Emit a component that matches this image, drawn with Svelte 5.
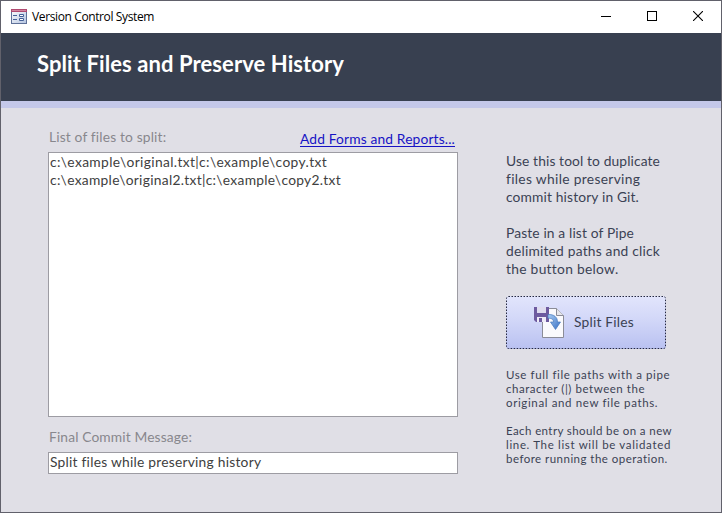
<script>
  const files = [
    ['c:\\example\\original.txt|c:\\example\\copy.txt', 277],
    ['c:\\example\\original2.txt|c:\\example\\copy2.txt', 291]
  ];
  const intro = [
    [['Use this tool to duplicate', 154], ['files while preserving', 134], ['commit history in Git.', 133]],
    [['Paste in a list of Pipe', 128], ['delimited paths and click', 154], ['the button below.', 112]]
  ];
  const notes = [
    [['Use full file paths with a pipe', 164], ['character (|) between the', 139], ['original and new file paths.', 152]],
    [['Each entry should be on a new', 166], ['line. The list will be validated', 165], ['before running the operation.', 162]]
  ];

  // Spreads the letters of a line so that it fills the given measure.
  function measure(node, width) {
    const natural = node.getBoundingClientRect().width;
    node.style.letterSpacing = `${(width - natural) / node.textContent.length}px`;
  }
</script>

<div class="window">
  <div class="titlebar">
    <svg class="form-icon" width="16" height="15" viewBox="0 0 16 15">
      <defs>
        <linearGradient id="frm" x1="0" y1="0" x2="1" y2="1">
          <stop offset="0" stop-color="#fff" /><stop offset="1" stop-color="#b4c4e0" />
        </linearGradient>
      </defs>
      <rect x=".5" y=".5" width="15" height="14" fill="url(#frm)" stroke="#5f7199" />
      <rect width="16" height="3" fill="#b04a70" />
      <rect x="1" y="1" width="14" height="1" fill="#d385a0" />
      <path d="M2 6.5h4M2 10.5h4" stroke="#456098" />
      <path d="M8.5 5.5h4v2h-4zM8.5 9.5h4v2h-4z" fill="#fff" stroke="#456098" />
    </svg>
    <span class="caption"><span use:measure={122}>Version Control System</span></span>
    <div class="controls">
      <svg width="10" height="10"><path d="M0 5.5h10" stroke="#000" /></svg>
      <svg width="10" height="10"><rect x=".5" y=".5" width="9" height="9" fill="none" stroke="#000" /></svg>
      <svg width="10" height="10"><path d="M0 0l10 10M10 0L0 10" stroke="#000" stroke-width="1.1" /></svg>
    </div>
  </div>
  <header><h1><span use:measure={307}>Split Files and Preserve History</span></h1></header>
  <main>
    <section class="left">
      <div class="labels">
        <span class="label"><span use:measure={117}>List of files to split:</span></span>
        <a href="#forms"><span use:measure={155}>Add Forms and Reports...</span></a>
      </div>
      <div class="field list">
        {#each files as [text, w]}<div><span use:measure={w}>{text}</span></div>{/each}
      </div>
      <div class="label message-label"><span use:measure={143}>Final Commit Message:</span></div>
      <div class="field message"><span use:measure={211}>Split files while preserving history</span></div>
    </section>
    <aside>
      <div class="intro">
        {#each intro as para}
          <p>{#each para as [text, w]}<span class="line"><span use:measure={w}>{text}</span></span>{/each}</p>
        {/each}
      </div>
      <button>
        <svg class="border" width="160" height="53"><rect x=".5" y=".5" width="159" height="52" rx="2" fill="none" stroke="#25283e" stroke-dasharray="1.5 1.5" /></svg>
        <svg class="split-icon" width="32" height="32" viewBox="0 0 32 32">
          <defs>
            <linearGradient id="arr" x1="0" y1="0" x2="1" y2="1">
              <stop offset="0" stop-color="#a9cdf2" /><stop offset="1" stop-color="#386fc4" />
            </linearGradient>
          </defs>
          <path d="M9.5 1.5h14l7 7v22h-21z" fill="#fafafd" stroke="#8b8c97" />
          <path d="M23.5 1.5v7h7" fill="#e5e5eb" stroke="#8b8c97" />
          <path d="M1 0h15v15H3l-2-2z" fill="#6d5a9f" />
          <path d="M4 0h9v6H4z" fill="#dfdcef" />
          <path d="M4 10h9v5H4z" fill="#eeebf7" />
          <path d="M6 11h3v4H6z" fill="#6d5a9f" />
          <path d="M15 7.500c6-.2 9.500 2.500 9.500 7.500h3l-5 7.500-5-7.500h3c0-2.500-1.500-3.800-5.500-3.800z" fill="url(#arr)" stroke="#4679bd" stroke-width=".7" />
        </svg>
        <span class="btn-text"><span use:measure={60}>Split Files</span></span>
      </button>
      <div class="notes">
        {#each notes as para}
          <p>{#each para as [text, w]}<span class="line"><span use:measure={w}>{text}</span></span>{/each}</p>
        {/each}
      </div>
    </aside>
  </main>
</div>

<style>
  .window {
    box-sizing: border-box;
    width: 722px;
    height: 513px;
    border: 1px solid #61616b;
    background: #e0dfe6;
    display: flex;
    flex-direction: column;
    font-family: Lato, "Open Sans", sans-serif;
    font-size: 13.8px;
    line-height: 18px;
    color: #3b4254;
    white-space: nowrap;
    overflow: hidden;
  }
  .titlebar {
    height: 32px;
    flex: none;
    background: #fff;
    display: flex;
    align-items: center;
    padding: 0 18px 0 10px;
    box-sizing: border-box;
    font-family: "Open Sans", sans-serif;
    font-size: 12px;
    color: #000;
  }
  .form-icon { margin-top: -2px; }
  .caption { margin: -1px 0 0 5px; }
  .controls { margin-left: auto; margin-top: -2px; display: flex; gap: 36px; }
  header {
    height: 51px;
    flex: none;
    background: #384050;
    border-bottom: 7px solid #c4c8e9;
    padding: 17px 0 0 36px;
  }
  h1 {
    margin: 0;
    font-size: 22px;
    line-height: 28px;
    font-weight: 700;
    color: #fff;
  }
  main { display: flex; padding: 20px 0 0 47px; }
  .left { width: 410px; margin-right: 48px; }
  .labels { display: flex; justify-content: space-between; height: 24px; padding: 0 3px 0 1px; }
  .label { color: #88878d; }
  a { color: #1713c4; text-decoration: underline; text-underline-offset: 2px; margin-top: 2px; }
  .field {
    box-sizing: border-box;
    width: 410px;
    background: #fff;
    border: 1px solid #9d9ca3;
    padding: 0 1px;
    color: #404040;
  }
  .list { height: 265px; }
  .message-label { margin: 11px 0 6px 1px; height: 18px; }
  .message { height: 22px; }
  aside { width: 180px; padding-top: 24px; }
  p { margin: 0; }
  .line { display: block; }
  p + p { margin-top: 18px; }
  button {
    position: relative;
    display: flex;
    align-items: center;
    width: 160px;
    height: 53px;
    margin: 18px 0 19px 0;
    padding: 0 0 0 27px;
    border: 0;
    border-radius: 3px;
    background: linear-gradient(#e2e5fc, #d2d7f8 45%, #b9c1f1);
    font: inherit;
    color: #3b4254;
  }
  .border { position: absolute; left: 0; top: 0; }
  .split-icon { margin-bottom: -1px; }
  .btn-text { margin: 0 0 2px 9px; }
  .notes { font-size: 11.5px; line-height: 14px; }
  .notes p + p { margin-top: 14px; }
</style>
